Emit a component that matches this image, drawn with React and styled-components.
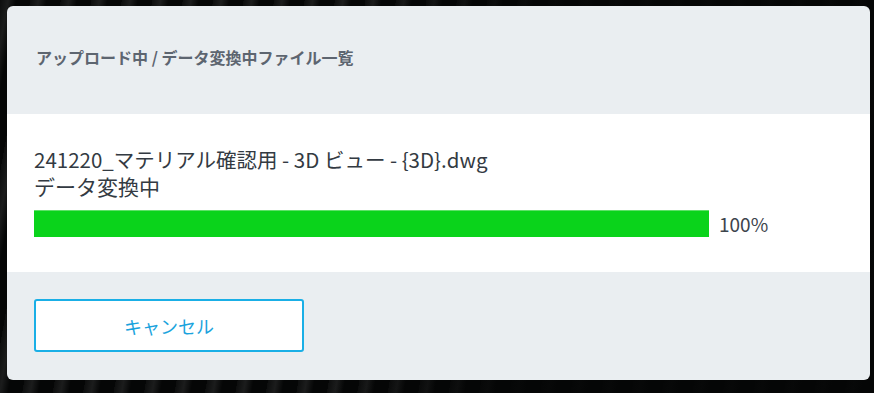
import React from 'react';
import styled, { createGlobalStyle } from 'styled-components';

const GlobalStyle = createGlobalStyle`
  html, body {
    margin: 0;
    padding: 0;
    height: 100%;
  }
  body {
    background-color: #050606;
    background-image:
      linear-gradient(95deg, rgba(0, 0, 0, 0) 0%, rgba(0, 0, 0, 0) 40%, rgba(5, 6, 6, 0.9) 60%, rgba(5, 6, 6, 0.9) 100%),
      repeating-linear-gradient(
        100deg,
        rgba(255, 255, 255, 0.03) 0px,
        rgba(255, 255, 255, 0.09) 8px,
        rgba(0, 0, 0, 0) 16px,
        rgba(0, 0, 0, 0) 30px
      );
    font-family: "Noto Sans CJK JP", "Noto Sans", sans-serif;
  }
`;

const Page = styled.div`
  padding: 6px 4px 0 7px;
  width: 863px;
`;

const Dialog = styled.section`
  background: #eaeef1;
  border-radius: 6px;
  overflow: hidden;
`;

const Header = styled.header`
  height: 108px;
  box-sizing: border-box;
  padding: 39px 29px 0;
`;

const Title = styled.h2`
  margin: 0;
  font-size: 16px;
  line-height: 24px;
  font-weight: 700;
  color: #5d6570;
`;

const Body = styled.div`
  background: #ffffff;
  height: 158px;
  box-sizing: border-box;
  padding: 32px 27px 0;
  color: #333a42;
`;

const FileName = styled.div`
  font-size: 20.5px;
  line-height: 27px;
`;

const Status = styled.div`
  font-size: 21px;
  line-height: 27px;
`;

const ProgressRow = styled.div`
  display: flex;
  align-items: center;
  gap: 10px;
  margin-top: 10px;
`;

const Track = styled.div`
  width: 675px;
  height: 27px;
  background: #e4e7ea;
`;

const Fill = styled.div`
  height: 100%;
  background: #0ad31b;
  box-shadow: inset 0 1px 0 #5ee068;
`;

const Percent = styled.span`
  font-size: 19px;
  line-height: 27px;
  color: #3d444c;
`;

const Footer = styled.footer`
  height: 108px;
  box-sizing: border-box;
  padding: 27px 27px 0;
`;

const CancelButton = styled.button`
  width: 270px;
  height: 53px;
  background: #ffffff;
  border: 2px solid #1aafe6;
  border-radius: 3px;
  color: #1aa3dd;
  font-family: "Noto Sans CJK JP", "Noto Sans", sans-serif;
  font-size: 18px;
  cursor: pointer;
`;

export default function App() {
  const progress = 100;
  return (
    <>
      <GlobalStyle />
      <Page>
        <Dialog>
          <Header>
            <Title>アップロード中 / データ変換中ファイル一覧</Title>
          </Header>
          <Body>
            <FileName>241220_マテリアル確認用 - 3D ビュー - {'{3D}'}.dwg</FileName>
            <Status>データ変換中</Status>
            <ProgressRow>
              <Track>
                <Fill style={{ width: `${progress}%` }} />
              </Track>
              <Percent>{progress}%</Percent>
            </ProgressRow>
          </Body>
          <Footer>
            <CancelButton>キャンセル</CancelButton>
          </Footer>
        </Dialog>
      </Page>
    </>
  );
}
